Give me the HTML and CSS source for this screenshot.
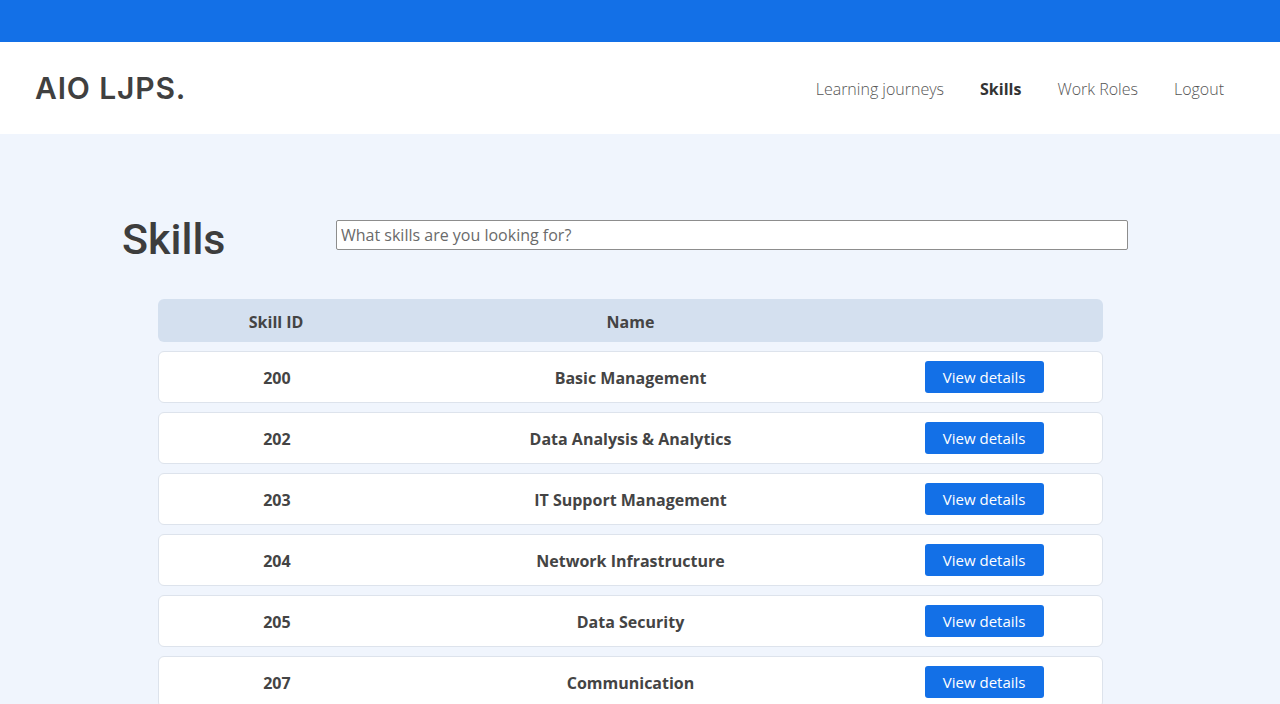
FILE: index.html
```html
<!DOCTYPE html>
<html lang="en">
<head>
<meta charset="utf-8">
<title>AIO LJPS - Skills</title>
<link rel="stylesheet" href="styles.css">
</head>
<body>
<div class="topbar"></div>
<header class="header">
  <div class="logo">AIO LJPS.</div>
  <nav class="nav">
    <a class="nav-link" href="#">Learning journeys</a>
    <a class="nav-link active" href="#">Skills</a>
    <a class="nav-link" href="#">Work Roles</a>
    <a class="nav-link" href="#">Logout</a>
  </nav>
</header>
<main class="main">
  <div class="title-row">
    <h1 class="title">Skills</h1>
    <input class="search" type="text" placeholder="What skills are you looking for?">
  </div>
  <div class="table">
    <div class="thead">
      <div class="cell">Skill ID</div>
      <div class="cell">Name</div>
      <div class="cell"></div>
    </div>
    <div class="row"><div class="cell">200</div><div class="cell">Basic Management</div><div class="cell"><button class="btn">View details</button></div></div>
    <div class="row"><div class="cell">202</div><div class="cell">Data Analysis &amp; Analytics</div><div class="cell"><button class="btn">View details</button></div></div>
    <div class="row"><div class="cell">203</div><div class="cell">IT Support Management</div><div class="cell"><button class="btn">View details</button></div></div>
    <div class="row"><div class="cell">204</div><div class="cell">Network Infrastructure</div><div class="cell"><button class="btn">View details</button></div></div>
    <div class="row"><div class="cell">205</div><div class="cell">Data Security</div><div class="cell"><button class="btn">View details</button></div></div>
    <div class="row"><div class="cell">207</div><div class="cell">Communication</div><div class="cell"><button class="btn">View details</button></div></div>
  </div>
</main>
</body>
</html>
```

FILE: styles.css
```css
* { box-sizing: border-box; }
html, body { margin: 0; padding: 0; }
body {
  background: #f0f5fd;
  font-family: "Open Sans", "Liberation Sans", sans-serif;
  overflow: hidden;
  height: 704px;
}
.topbar {
  height: 42px;
  background: #1370e7;
}
.header {
  height: 92px;
  background: #ffffff;
  display: flex;
  align-items: center;
  justify-content: space-between;
  padding: 0 56px 0 35px;
}
.logo {
  font-family: Inter, "Liberation Sans", sans-serif;
  font-weight: 600;
  font-size: 30px;
  letter-spacing: 0.85px;
  color: #404040;
}
.nav {
  display: flex;
  gap: 36px;
  align-items: center;
  padding-top: 2px;
}
.nav-link {
  font-size: 16px;
  font-weight: 300;
  color: #555555;
  text-decoration: none;
}
.nav-link.active {
  font-weight: 700;
  color: #333333;
}
.main {
  padding: 86px 0 0 122px;
}
.title-row {
  display: flex;
  align-items: center;
  height: 30px;
  margin-bottom: 49px;
}
.title {
  margin: 0;
  width: 214px;
  font-family: Roboto, "Liberation Sans", sans-serif;
  font-weight: 500;
  font-size: 43px;
  color: #3d3d3d;
  line-height: 1;
  position: relative;
  top: 4px;
}
.search {
  width: 792px;
  height: 30px;
  border: 1px solid #8d8d8d;
  border-radius: 2px;
  background: #fff;
  padding: 0 4px;
  font-family: "Open Sans", sans-serif;
  font-size: 16px;
  color: #333;
  outline: none;
}
.search::placeholder { color: #6a6a6a; }
.table {
  width: 945px;
  margin-left: 36px;
  display: flex;
  flex-direction: column;
  gap: 9px;
}
.thead, .row {
  display: grid;
  grid-template-columns: 1fr 2fr 1fr;
  align-items: center;
  border-radius: 6px;
}
.thead {
  height: 43px;
  background: #d4e0ef;
}
.row {
  height: 52px;
  background: #ffffff;
  border: 1px solid #dde3ec;
}
.cell {
  text-align: center;
  font-size: 16px;
  font-weight: 700;
  color: #444444;
  padding-top: 2px;
}
.btn {
  width: 119px;
  height: 32px;
  border: none;
  border-radius: 3px;
  background: #1370e7;
  color: #ffffff;
  font-family: "Open Sans", sans-serif;
  font-size: 15px;
  font-weight: 400;
  cursor: pointer;
}
.row .cell:last-child { padding-top: 0; }
```
